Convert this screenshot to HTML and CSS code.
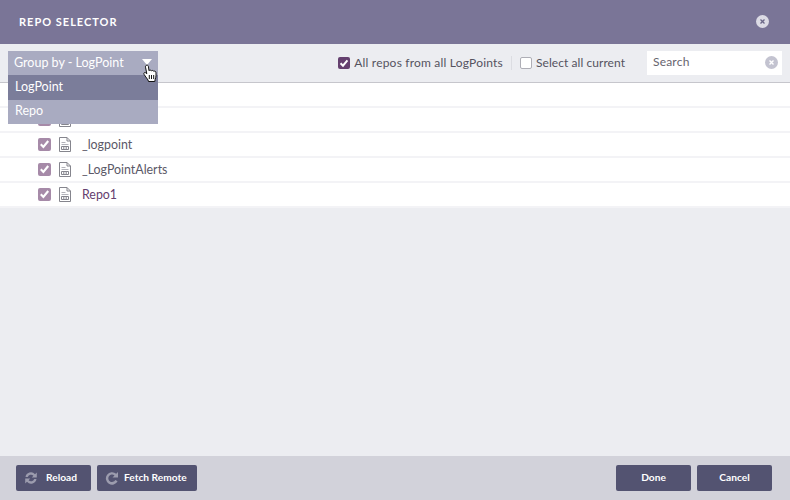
FILE: index.html
```html
<!DOCTYPE html>
<html lang="en">
<head>
<meta charset="utf-8">
<title>Repo Selector</title>
<link rel="stylesheet" href="styles.css">
</head>
<body>
<svg class="sprites" width="0" height="0" aria-hidden="true">
  <symbol id="doc" viewBox="0 0 12 15">
    <path d="M.5.5h7.5l3.500 3.500v10.500h-11z" fill="#fff" stroke="#85858d"/>
    <path d="M8 .5v3.500h3.500" fill="none" stroke="#85858d"/>
    <path d="M2.500 5.500h4M2.500 7.500h7" stroke="#b4b4bb"/>
    <path d="M2.500 9.500h7v3h-7zM4.800 9.500v3M7.200 9.500v3" fill="none" stroke="#85858d"/>
  </symbol>
  <symbol id="tick" viewBox="0 0 14 14">
    <path d="M3 7.300l2.800 2.900 5.200-6.400" fill="none" stroke="#fff" stroke-width="2.300"/>
  </symbol>
</svg>
<div class="dialog">
  <header class="title-bar">
    <h1 class="title">REPO SELECTOR</h1>
    <span class="close-icon"><svg width="13" height="13" viewBox="0 0 13 13"><circle cx="6.500" cy="6.500" r="6.500" fill="#dcdbe5"/><path d="M4.500 4.500l4 4M8.500 4.500l-4 4" stroke="#6c6888" stroke-width="1.300"/></svg></span>
  </header>
  <div class="toolbar">
    <label class="option"><span class="box box-dark"><svg width="12" height="12"><use href="#tick"/></svg></span>All repos from all LogPoints</label>
    <span class="divider"></span>
    <label class="option option-tight"><span class="box box-empty"></span>Select all current</label>
    <div class="search">
      <span class="search-text">Search</span>
      <svg width="13" height="13" viewBox="0 0 13 13"><circle cx="6.500" cy="6.500" r="6.500" fill="#c3c3d0"/><path d="M4.500 4.500l4 4M8.500 4.500l-4 4" stroke="#fff" stroke-width="1.400"/></svg>
    </div>
  </div>
  <main class="list">
    <div class="row"></div>
    <div class="row"><span class="box box-light"><svg width="14" height="14"><use href="#tick"/></svg></span><svg class="doc" width="12" height="15"><use href="#doc"/></svg></div>
    <div class="row"><span class="box box-light"><svg width="14" height="14"><use href="#tick"/></svg></span><svg class="doc" width="12" height="15"><use href="#doc"/></svg><span class="repo">_logpoint</span></div>
    <div class="row"><span class="box box-light"><svg width="14" height="14"><use href="#tick"/></svg></span><svg class="doc" width="12" height="15"><use href="#doc"/></svg><span class="repo">_LogPointAlerts</span></div>
    <div class="row"><span class="box box-light"><svg width="14" height="14"><use href="#tick"/></svg></span><svg class="doc" width="12" height="15"><use href="#doc"/></svg><span class="repo repo-purple">Repo1</span></div>
  </main>
  <footer class="footer">
    <div class="btn-group">
      <button class="btn btn-reload"><svg width="14" height="14" viewBox="0 0 14 14"><path d="M1.500 6A5.500 5.500 0 0 1 11 3.200L12.800 1.500v5h-5l1.600-1.700A3.300 3.300 0 0 0 3.800 6zM12.500 8A5.500 5.500 0 0 1 3 10.800L1.200 12.500v-5h5L4.600 9.200A3.300 3.300 0 0 0 10.200 8z" fill="#9c9cae"/></svg><span>Reload</span></button>
      <button class="btn btn-fetch"><svg width="14" height="14" viewBox="0 0 14 14"><path d="M13 1v5.500H7.500l2-2A3.700 3.700 0 1 0 10.300 9l2.300 1.200A6.200 6.200 0 1 1 11.200 2.800z" fill="#9c9cae"/></svg><span>Fetch Remote</span></button>
    </div>
    <div class="btn-group">
      <button class="btn">Done</button>
      <button class="btn">Cancel</button>
    </div>
  </footer>
  <div class="dropdown">
    <div class="dd-head"><span>Group by - LogPoint</span><span class="caret"></span></div>
    <div class="dd-item dd-active">LogPoint</div>
    <div class="dd-item">Repo</div>
    <svg class="cursor" width="17" height="20" viewBox="0 0 16 20"><path d="M3.500 1.500c1-.8 2.200-.2 2.400.8l.6 4.500c.6-1 2-.9 2.400.1.700-.8 2-.5 2.300.4.800-.5 2-.1 2.200.9.300 2.200.2 5-.8 7.300l-.3 2H6l-.5-1.500C4 14 2.500 11.800 1.500 10.300c-.6-1 .3-2.200 1.500-1.600l1.300 1L3 3.200c-.1-.7 0-1.300.5-1.700z" fill="#fff" stroke="#111" stroke-width="1"/><path d="M6.800 11v4M9 11v4M11.200 11v4" stroke="#111" stroke-width="1"/></svg>
  </div>
</div>
</body>
</html>
```

FILE: styles.css
```css
* { box-sizing: border-box; }
html, body { margin: 0; height: 100%; }
body { width: 790px; height: 500px; overflow: hidden; font-family: Lato, "Open Sans", sans-serif; color: #55535f; }
.sprites { position: absolute; }
.dialog { position: relative; width: 790px; height: 500px; display: flex; flex-direction: column; background: #ecedf1; }
.title-bar { height: 44px; flex: none; background: #7a7597; display: flex; align-items: center; justify-content: space-between; padding: 0 21px 1px 19px; }
.title { margin: 0; font-size: 11px; font-weight: 700; letter-spacing: 1px; color: #fff; }
.close-icon { display: flex; }
.toolbar { height: 39px; flex: none; display: flex; align-items: center; justify-content: flex-end; padding: 0 8px 1px 0; border-bottom: 1px solid #c6c6cc; font-size: 12px; }
.option { display: flex; align-items: center; gap: 4px; letter-spacing: .2px; }
.option-tight { letter-spacing: .06px; }
.box { display: flex; align-items: center; justify-content: center; flex: none; border-radius: 2px; }
.box-dark { width: 12px; height: 12px; background: #65406f; }
.box-empty { width: 12px; height: 12px; background: #fff; border: 1px solid #aeaeb6; }
.box-light { width: 13px; height: 13px; background: #a68aa8; }
.divider { width: 1px; height: 14px; background: #dcdde2; margin: 0 8px; }
.search { width: 135px; height: 24px; margin-left: 22px; background: #fff; display: flex; align-items: center; justify-content: space-between; padding: 0 4px 0 6px; }
.search-text { font-size: 12px; letter-spacing: .2px; color: #66646e; position: relative; top: -1px; }
.list { flex: 1; display: flex; flex-direction: column; }
.row { height: 25px; background: #fff; border-bottom: 2px solid #f3f3f6; display: flex; align-items: center; padding: 0 0 1px 38px; font-size: 12.400px; }
.row .doc { margin-left: 8px; }
.repo { margin-left: 11px; color: #5b5968; }
.repo-purple { color: #65406f; }
.footer { height: 44px; flex: none; background: #d2d2da; display: flex; align-items: center; justify-content: space-between; padding: 0 18px 0 16px; }
.btn-group { display: flex; gap: 6px; }
.btn { width: 75px; height: 26px; border: 0; border-radius: 2px; background: #535371; color: #fff; font: 700 10.200px Lato, sans-serif; display: flex; align-items: center; justify-content: center; padding: 0 0 2px; }
.btn svg { position: relative; top: 1px; }
.btn-reload { justify-content: flex-start; padding-left: 8px; gap: 8px; }
.btn-fetch { width: 100px; justify-content: flex-start; padding-left: 8px; gap: 5px; }
.dropdown { position: absolute; left: 8px; top: 51px; width: 150px; color: #fff; font-size: 12.500px; font-weight: 400; }
.dd-head { height: 24px; background: #a9abc1; display: flex; align-items: center; justify-content: space-between; padding: 0 6px 2px; }
.caret { width: 0; height: 0; border: 5px solid transparent; border-top: 6px solid #fff; border-bottom: 0; }
.dd-item { height: 24.500px; background: #a9abc1; display: flex; align-items: center; padding: 0 0 2px 7px; }
.dd-active { background: #7b7d9a; }
.cursor { position: absolute; left: 134px; top: 13px; }
```
